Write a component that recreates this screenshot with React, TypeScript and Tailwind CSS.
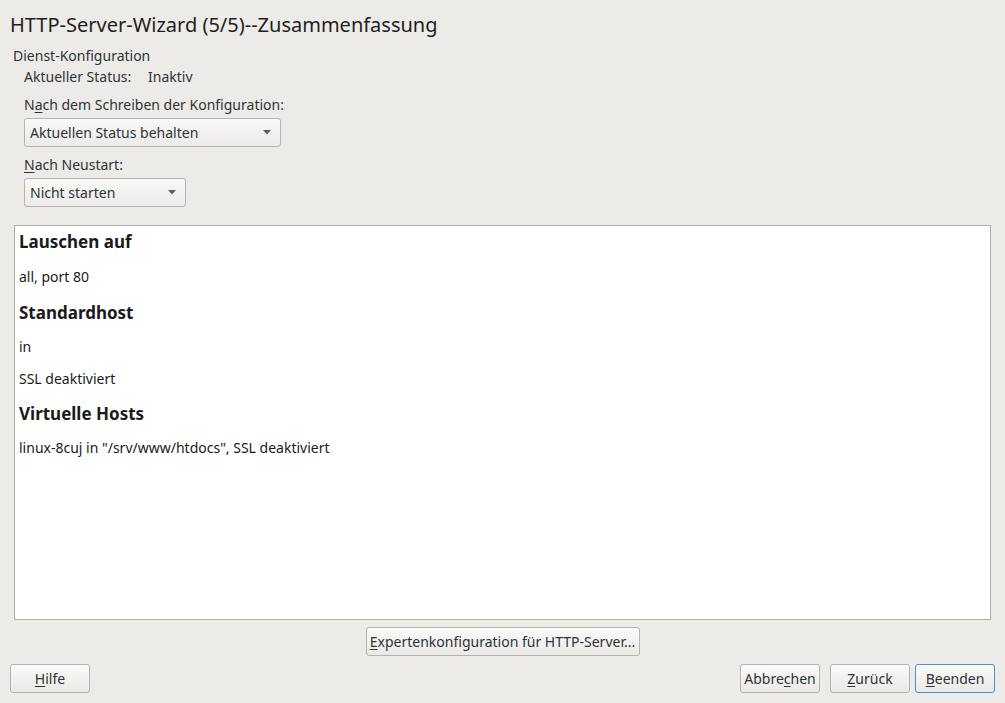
import React from "react";

const font = { fontFamily: '"Noto Sans", "Open Sans", sans-serif' };

function U({ children }: { children: React.ReactNode }) {
  return <span className="underline underline-offset-2">{children}</span>;
}

function Select({ label, width }: { label: string; width: string }) {
  return (
    <div
      className={`flex h-[29px] ${width} items-center justify-between rounded-[3px] border border-[#b6b3ad] bg-gradient-to-b from-[#f8f8f7] to-[#edebe9] pl-[5px] pr-[9px] text-[14px] text-[#2e3436]`}
    >
      <span>{label}</span>
      <svg width="8" height="5" viewBox="0 0 8 5">
        <path d="M0 0 L8 0 L4 4.5 Z" fill="#5c5f5f" />
      </svg>
    </div>
  );
}

function Button({
  children,
  width,
  focused,
}: {
  children: React.ReactNode;
  width: string;
  focused?: boolean;
}) {
  return (
    <button
      className={`flex h-[29px] ${width} items-center justify-center rounded-[3px] border bg-gradient-to-b from-[#fafaf9] to-[#ebe9e6] text-[14px] text-[#2e3436] ${
        focused ? "border-[#4a90d9]" : "border-[#b6b3ad]"
      }`}
    >
      {children}
    </button>
  );
}

export default function App() {
  return (
    <div
      className="flex h-[703px] w-[1005px] flex-col overflow-hidden bg-[#edebe8] text-[#2e3436]"
      style={font}
    >
      <h1 className="pl-[10px] pt-[10px] text-[20px] leading-[30px] text-[#1e1e1e]">
        HTTP-Server-Wizard (5/5)--Zusammenfassung
      </h1>
      <div className="pl-[13px] pt-[6px] text-[14px] leading-[20px]">Dienst-Konfiguration</div>
      <div className="flex flex-col pl-[24px] text-[14px]">
        <div className="-mt-[1px] flex h-[22px] items-center">
          <span className="w-[124px]">Aktueller Status:</span>
          <span>Inaktiv</span>
        </div>
        <div className="mt-[8px] leading-[20px]">
          N<U>a</U>ch dem Schreiben der Konfiguration:
        </div>
        <div className="mt-[3px]">
          <Select label="Aktuellen Status behalten" width="w-[257px]" />
        </div>
        <div className="mt-[8px] leading-[20px]">
          <U>N</U>ach Neustart:
        </div>
        <div className="mt-[3px]">
          <Select label="Nicht starten" width="w-[162px]" />
        </div>
      </div>
      <div className="mx-[14px] mt-[18px] h-[395px] border border-[#b0ada8] bg-white pl-[4px] pt-[4px] text-[#1a1a1a]">
        <div className="text-[17px] font-bold leading-[24px]">Lauschen auf</div>
        <div className="mt-[13px] text-[14px] leading-[20px]">all, port 80</div>
        <div className="mt-[14px] text-[17px] font-bold leading-[24px]">Standardhost</div>
        <div className="mt-[12px] text-[14px] leading-[20px]">in</div>
        <div className="mt-[12px] text-[14px] leading-[20px]">SSL deaktiviert</div>
        <div className="mt-[13px] text-[17px] font-bold leading-[24px]">Virtuelle Hosts</div>
        <div className="mt-[12px] text-[14px] leading-[20px]">
          linux-8cuj in "/srv/www/htdocs", SSL deaktiviert
        </div>
      </div>
      <div className="mt-[7px] flex justify-center">
        <Button width="w-[274px]">
          <span>
            <U>E</U>xpertenkonfiguration für HTTP-Server...
          </span>
        </Button>
      </div>
      <div className="mt-[8px] flex items-center px-[10px]">
        <Button width="w-[80px]">
          <span>
            <U>H</U>ilfe
          </span>
        </Button>
        <div className="flex-1" />
        <div className="flex gap-[10px]">
          <Button width="w-[80px]">
            <span>
              Abbre<U>c</U>hen
            </span>
          </Button>
          <div className="flex gap-[5px]">
            <Button width="w-[80px]">
              <span>
                <U>Z</U>urück
              </span>
            </Button>
            <Button width="w-[80px]" focused>
              <span>
                <U>B</U>eenden
              </span>
            </Button>
          </div>
        </div>
      </div>
    </div>
  );
}
